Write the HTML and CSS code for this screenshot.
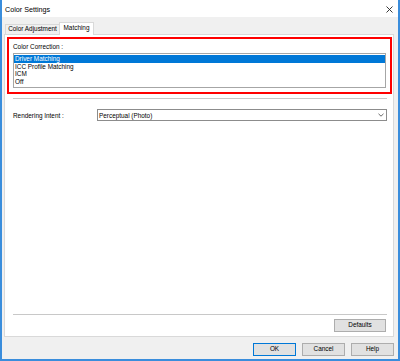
FILE: index.html
```html
<!DOCTYPE html>
<html>
<head>
<meta charset="utf-8">
<link rel="stylesheet" href="styles.css">
</head>
<body>
<div class="window">
  <div class="titlebar">
    <span class="title">Color Settings</span>
    <svg class="close" width="7" height="7" viewBox="0 0 7 7"><path d="M0.5 0.5 L6.5 6.5 M6.5 0.5 L0.5 6.5" stroke="#222" stroke-width="0.9" fill="none"/></svg>
  </div>
  <div class="tabs">
    <div class="tab">Color Adjustment</div>
    <div class="tab active">Matching</div>
  </div>
  <div class="panel">
    <div class="highlight">
      <div class="label">Color Correction :</div>
      <div class="listbox">
        <div class="item selected">Driver Matching</div>
        <div class="item">ICC Profile Matching</div>
        <div class="item">ICM</div>
        <div class="item">Off</div>
      </div>
    </div>
    <div class="sep"></div>
    <div class="intent-row">
      <span class="intent-label">Rendering Intent :</span>
      <div class="select">
        <span>Perceptual (Photo)</span>
        <svg class="chev" width="6" height="4" viewBox="0 0 6 4"><path d="M0.5 0.8 L3 3.2 L5.5 0.8" stroke="#444" stroke-width="0.8" fill="none"/></svg>
      </div>
    </div>
    <div class="spacer"></div>
    <div class="sep"></div>
    <div class="defaults-row">
      <button class="btn defaults">Defaults</button>
    </div>
  </div>
  <div class="footer">
    <button class="btn primary">OK</button>
    <button class="btn">Cancel</button>
    <button class="btn">Help</button>
  </div>
</div>
</body>
</html>
```
FILE: styles.css
```css
html, body {
  margin: 0;
  padding: 0;
  background: #ffffff;
}
body {
  font-family: "Liberation Sans", Arial, sans-serif;
  font-size: 6.4px;
  color: #000;
}
.window {
  width: 400px;
  height: 361px;
  box-sizing: border-box;
  border: 0 solid #3a8ddc;
  border-width: 0 2px 2px 2px;
  background: #f0f0f0;
  display: flex;
  flex-direction: column;
}
.titlebar {
  height: 17px;
  flex: none;
  background: #fff;
  display: flex;
  align-items: center;
  justify-content: space-between;
  padding: 2px 5px 0 3px;
  box-sizing: border-box;
}
.title {
  font-size: 7.2px;
}
.close {
  display: block;
  margin-top: -1px;
}
.tabs {
  height: 17px;
  flex: none;
  display: flex;
  align-items: flex-end;
  padding-left: 3px;
}
.tab {
  height: 10px;
  width: 55px;
  box-sizing: border-box;
  border: 1px solid #d9d9d9;
  border-bottom: none;
  background: #f0f0f0;
  display: flex;
  align-items: center;
  justify-content: center;
  line-height: 1;
}
.tab.active {
  height: 13px;
  width: 35px;
  margin-left: -1px;
  margin-bottom: -1px;
  background: #fff;
  position: relative;
  z-index: 1;
  padding-bottom: 2px;
}
.panel {
  height: 303px;
  flex: none;
  margin: 0 4px 0 2px;
  box-sizing: border-box;
  background: #fff;
  border: 1px solid #d9d9d9;
  display: flex;
  flex-direction: column;
}
.highlight {
  margin: 2px 1px 0 2px;
  height: 57px;
  box-sizing: border-box;
  border: 2px solid #ff0000;
  padding: 4px 4px 0 4px;
}
.label {
  height: 7px;
  line-height: 7px;
  margin-bottom: 3px;
}
.listbox {
  height: 35px;
  box-sizing: border-box;
  border: 1px solid #a6a6a6;
  background: #fff;
  padding-top: 1px;
}
.item {
  height: 7.6px;
  line-height: 7.6px;
  padding-left: 1px;
}
.item.selected {
  background: #0078d7;
  color: #fff;
}
.sep {
  flex: none;
  height: 0;
  border-top: 1px solid #c8c8c8;
  margin: 4px 6px 0 8px;
}
.intent-row {
  margin: 10px 6px 0 8px;
  display: flex;
  align-items: center;
}
.intent-label {
  width: 84px;
  flex: none;
}
.select {
  flex: 1;
  height: 12px;
  box-sizing: border-box;
  border: 1px solid #8c8c8c;
  display: flex;
  align-items: center;
  justify-content: space-between;
  padding: 0 2px 0 1px;
}
.chev {
  display: block;
}
.spacer {
  flex: 1;
}
.defaults-row {
  display: flex;
  justify-content: flex-end;
  margin: 4px 7px 4px 8px;
}
.btn {
  font-family: "Liberation Sans", Arial, sans-serif;
  font-size: 6.4px;
  color: #000;
  height: 13px;
  width: 43px;
  box-sizing: border-box;
  border: 1px solid #adadad;
  background: #e1e1e1;
  padding: 0;
  margin: 0;
  line-height: 1;
}
.btn.defaults {
  width: 52px;
}
.btn.primary {
  border-color: #0078d7;
}
.footer {
  flex: 1;
  display: flex;
  justify-content: flex-end;
  align-items: flex-start;
  gap: 6px;
  padding: 6px 4px 0 0;
}
```
